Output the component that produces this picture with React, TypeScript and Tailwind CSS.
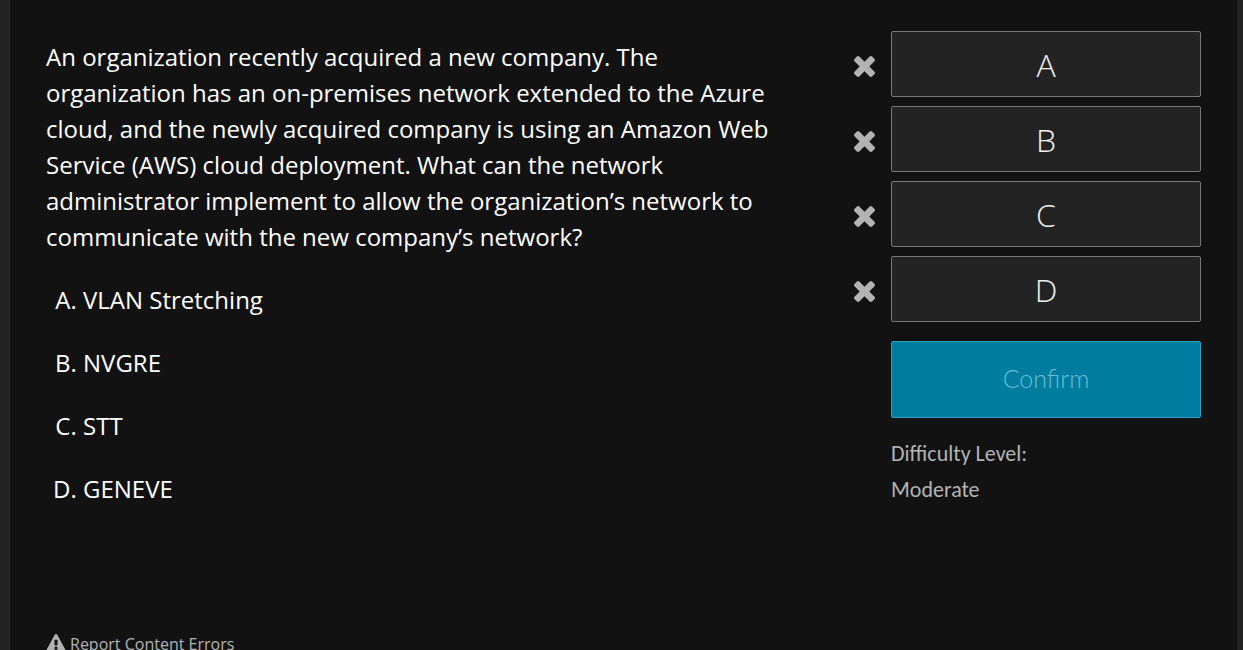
import { useState } from 'react'

type Answer = {
  id: string
  text: string
}

const QUESTION =
  'An organization recently acquired a new company. The organization has an on-premises network extended to the Azure cloud, and the newly acquired company is using an Amazon Web Service (AWS) cloud deployment. What can the network administrator implement to allow the organization’s network to communicate with the new company’s network?'

const ANSWERS: Answer[] = [
  { id: 'A', text: 'VLAN Stretching' },
  { id: 'B', text: 'NVGRE' },
  { id: 'C', text: 'STT' },
  { id: 'D', text: 'GENEVE' },
]

function CrossIcon() {
  return (
    <svg viewBox="302 366 1188 1188" className="size-[21px] fill-current" aria-hidden="true">
      <path d="M1490 1322q0 40-28 68l-136 136q-28 28-68 28t-68-28l-294-294-294 294q-28 28-68 28t-68-28l-136-136q-28-28-28-68t28-68l294-294-294-294q-28-28-28-68t28-68l136-136q28-28 68-28t68 28l294 294 294-294q28-28 68-28t68 28l136 136q28 28 28 68t-28 68l-294 294 294 294q28 28 28 68z" />
    </svg>
  )
}

function WarningIcon() {
  return (
    <svg viewBox="0 0 1792 1792" className="size-5 shrink-0 fill-current" aria-hidden="true">
      <path d="M1024 1375v-190q0-14-9.500-23.500t-22.500-9.500h-192q-13 0-22.500 9.500t-9.500 23.500v190q0 14 9.500 23.500t22.500 9.500h192q13 0 22.500-9.500t9.500-23.500zm-2-374l18-459q0-12-10-19-13-11-24-11h-220q-11 0-24 11-10 7-10 21l17 457q0 10 10 16.500t24 6.500h185q14 0 23.500-6.500t10.500-16.500zm-14-934l768 1408q35 63-2 126-17 29-46.500 46t-63.500 17h-1536q-34 0-63.500-17t-46.500-46q-37-63-2-126l768-1408q17-31 47-49t65-18 65 18 47 49z" />
    </svg>
  )
}

export default function App() {
  const [selected, setSelected] = useState<string | null>(null)
  const [excluded, setExcluded] = useState<string[]>([])

  function toggleExcluded(id: string) {
    setExcluded((ids) => (ids.includes(id) ? ids.filter((i) => i !== id) : [...ids, id]))
  }

  return (
    <div className="flex min-h-screen bg-[#232323] pr-1.5 pl-2.5 font-['Open_Sans',sans-serif]">
      <main className="flex min-w-0 flex-1 flex-col bg-[#121212] px-9">
        <div className="flex items-start justify-between gap-12">
          <section className="max-w-[750px] flex-1 pt-[39px] text-2xl leading-9 text-white">
            <p>{QUESTION}</p>
            <ol className="mt-[27px] flex list-[upper-alpha] flex-col gap-[27px] pl-[37px]">
              {ANSWERS.map((answer) => (
                <li key={answer.id} className={excluded.includes(answer.id) ? 'line-through' : ''}>
                  {answer.text}
                </li>
              ))}
            </ol>
          </section>

          <aside className="w-[347px] shrink-0 pt-[31px] font-['Carlito','Lato',sans-serif]">
            <div className="flex flex-col gap-[9px]">
              {ANSWERS.map((answer) => (
                <div key={answer.id} className="flex items-center gap-4">
                  <button
                    type="button"
                    aria-label={`Rule out answer ${answer.id}`}
                    onClick={() => toggleExcluded(answer.id)}
                    className="pt-1 text-[#b3b3b3]"
                  >
                    <CrossIcon />
                  </button>
                  <button
                    type="button"
                    aria-pressed={selected === answer.id}
                    onClick={() => setSelected(answer.id)}
                    className="h-[66px] flex-1 rounded-xs border border-[#77777c] bg-[#232323] pt-0.5 font-['Open_Sans',sans-serif] text-[32px] font-light text-[#f0f0f0]"
                  >
                    {answer.id}
                  </button>
                </div>
              ))}
            </div>

            <div className="pt-[19px] pl-[37px]">
              <button
                type="button"
                disabled={!selected}
                className="h-[77px] w-full rounded-xs border border-[#2f9fc5] bg-[#007c9f] pb-0.5 font-['Lato',sans-serif] text-[25px] font-light text-white disabled:text-[#6bbdd3]"
              >
                Confirm
              </button>
              <p className="mt-[18px] text-[22px] leading-9 text-[#b3b3b3]">
                Difficulty Level:
                <br />
                Moderate
              </p>
            </div>
          </aside>
        </div>

        <footer className="pt-[124px]">
          <a href="#report" className="inline-flex items-center gap-1 text-base text-[#b3b3b3]">
            <WarningIcon />
            Report Content Errors
          </a>
        </footer>
      </main>
    </div>
  )
}
